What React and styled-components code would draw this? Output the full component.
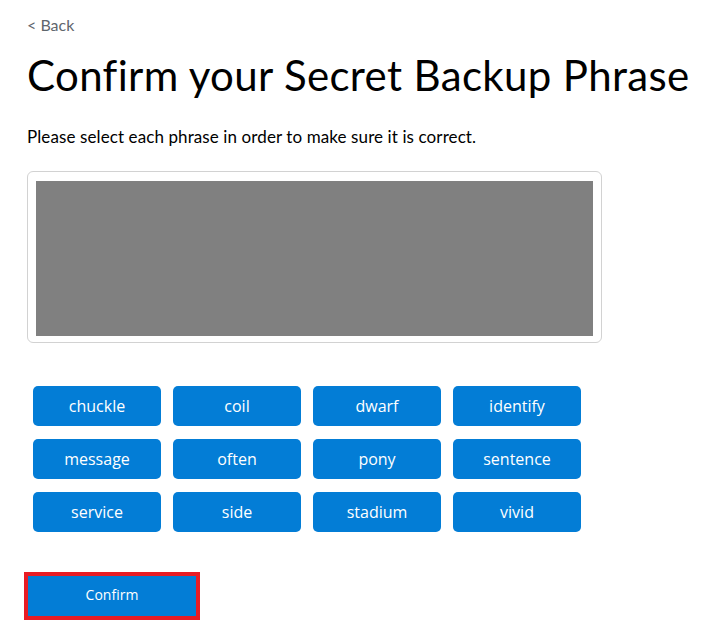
import React from "react";
import styled, { createGlobalStyle } from "styled-components";

const GlobalStyle = createGlobalStyle`
  html, body {
    margin: 0;
    padding: 0;
    background: #ffffff;
  }
  body {
    font-family: "Lato", "Liberation Sans", sans-serif;
    color: #000000;
  }
`;

const Page = styled.div`
  width: 713px;
  height: 628px;
  box-sizing: border-box;
  padding: 14px 0 0 27px;
  display: flex;
  flex-direction: column;
  align-items: flex-start;
`;

const BackLink = styled.a`
  font-size: 16px;
  color: #5f666d;
  text-decoration: none;
  line-height: 22px;
  cursor: pointer;
`;

const Title = styled.h1`
  margin: 15px 0 0;
  font-size: 42px;
  font-weight: 400;
  line-height: 48px;
  letter-spacing: 0.35px;
  white-space: nowrap;
`;

const Subtitle = styled.p`
  margin: 28px 0 0;
  font-size: 17px;
  line-height: 20px;
  letter-spacing: 0.1px;
`;

const PhraseBox = styled.div`
  margin-top: 24px;
  width: 575px;
  height: 172px;
  box-sizing: border-box;
  border: 1px solid #d2d2d2;
  border-radius: 6px;
  padding: 9px 8px 6px 8px;
`;

const Blurred = styled.div`
  width: 100%;
  height: 100%;
  background: #808080;
`;

const WordGrid = styled.div`
  margin: 43px 0 0 6px;
  display: grid;
  grid-template-columns: repeat(4, 128px);
  column-gap: 12px;
  row-gap: 13px;
`;

const WordButton = styled.button`
  height: 40px;
  border: none;
  border-radius: 5px;
  background: #037dd6;
  color: #ffffff;
  font-family: "Open Sans", "Liberation Sans", sans-serif;
  font-size: 16px;
  cursor: pointer;
  padding: 0;
`;

const ConfirmFrame = styled.div`
  margin: 40px 0 0 -3px;
  border: 4px solid #e81c24;
`;

const ConfirmButton = styled.button`
  display: block;
  width: 168px;
  height: 40px;
  border: none;
  background: #037dd6;
  color: #ffffff;
  font-family: "Open Sans", "Liberation Sans", sans-serif;
  font-size: 14px;
  cursor: pointer;
  padding: 0 0 3px;
`;

const words = [
  "chuckle", "coil", "dwarf", "identify",
  "message", "often", "pony", "sentence",
  "service", "side", "stadium", "vivid",
];

export default function App() {
  return (
    <>
      <GlobalStyle />
      <Page>
        <BackLink>{"< Back"}</BackLink>
        <Title>Confirm your Secret Backup Phrase</Title>
        <Subtitle>Please select each phrase in order to make sure it is correct.</Subtitle>
        <PhraseBox>
          <Blurred />
        </PhraseBox>
        <WordGrid>
          {words.map((w) => (
            <WordButton key={w}>{w}</WordButton>
          ))}
        </WordGrid>
        <ConfirmFrame>
          <ConfirmButton>Confirm</ConfirmButton>
        </ConfirmFrame>
      </Page>
    </>
  );
}
